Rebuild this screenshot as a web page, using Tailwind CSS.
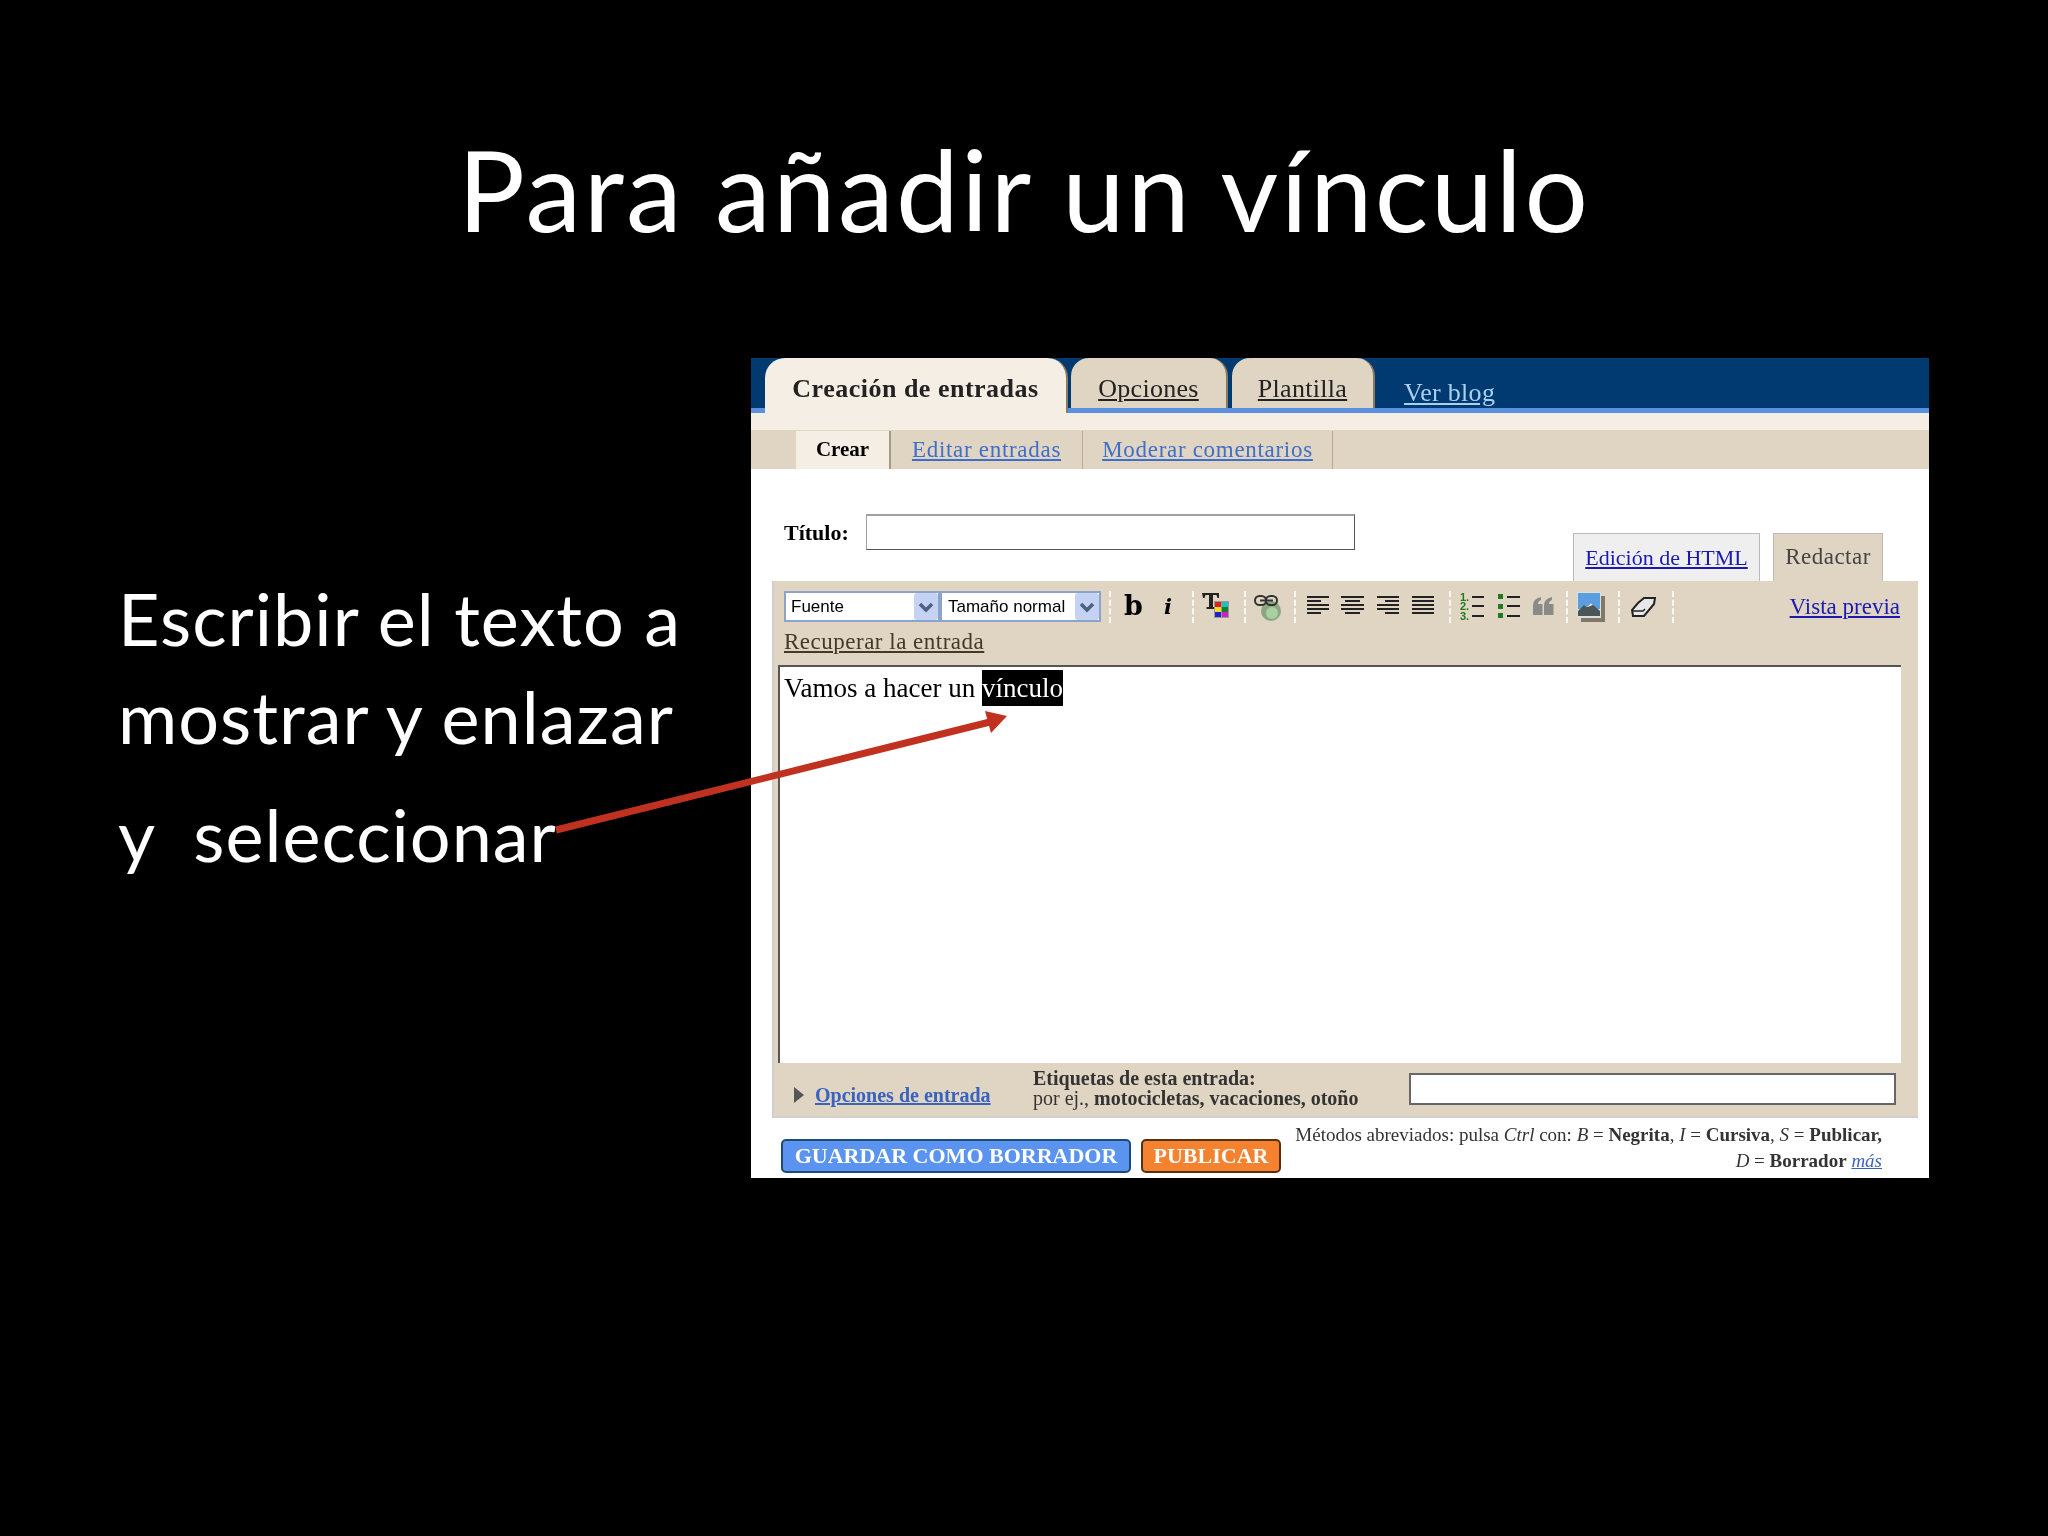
<!DOCTYPE html>
<html lang="es">
<head>
<meta charset="UTF-8">
<title>Para añadir un vínculo</title>
<script src="https://cdn.jsdelivr.net/npm/@tailwindcss/browser@4"></script>
</head>
<body class="bg-black">
<div class="relative w-[2048px] h-[1536px] overflow-hidden bg-black text-white font-['Lato',sans-serif]">

  <h1 class="h-[358px] pt-[119px] text-center text-[112px] leading-[140px] font-normal tracking-[2.4px]">Para añadir un vínculo</h1>

  <div class="flex">
    <!-- left text -->
    <div class="w-[751px] pl-[118px] pt-[211px] text-[72px] tracking-[1px]">
      <p class="leading-[98px]">Escribir el texto a</p>
      <p class="leading-[98px]">mostrar y enlazar</p>
      <p class="leading-[98px] mt-[20px] whitespace-pre">y  seleccionar</p>
    </div>

    <!-- blogger panel -->
    <div class="w-[1178px] h-[820px] bg-white text-black font-['Liberation_Serif',serif] flex flex-col blur-[0.4px]">
      <div class="h-[55px] bg-[#003a70] border-b-[5px] border-[#5b8fe0] flex items-start pl-[14px] text-[26px] tracking-[0.3px] shrink-0">
        <div class="w-[303px] h-[55px] pt-[6px] bg-[#f5eee4] rounded-t-[20px] border-r-2 border-[#8a7a60] flex items-center justify-center font-bold tracking-[0.5px] text-[#222]">Creación de entradas</div>
        <div class="ml-[3px] w-[157px] h-[50px] pt-[10px] bg-[#e0d5c3] rounded-t-[18px] border-r-2 border-[#8a7a60] flex items-center justify-center"><a class="underline text-[#222]">Opciones</a></div>
        <div class="ml-[4px] w-[143px] h-[50px] pt-[10px] bg-[#e0d5c3] rounded-t-[18px] border-r-2 border-[#8a7a60] flex items-center justify-center"><a class="underline text-[#222]">Plantilla</a></div>
        <a class="ml-[29px] h-[50px] pt-[10px] leading-[50px] underline text-[#a8d0f0]">Ver blog</a>
      </div>
      <div class="h-[17px] bg-[#f5eee4] shrink-0"></div>
      <div class="h-[39px] bg-[#e0d5c3] pl-[45px] pt-[1px] flex text-[23px] tracking-[0.7px] shrink-0">
        <div class="w-[95px] bg-[#f5eee4] border-r-2 border-[#a89a80] flex items-center justify-center font-bold text-[21px] tracking-normal">Crear</div>
        <div class="w-[192px] border-r border-[#b8aa90] flex items-center justify-center"><a class="underline text-[#3f6fc8]">Editar entradas</a></div>
        <div class="w-[250px] border-r border-[#b8aa90] flex items-center justify-center"><a class="underline text-[#3f6fc8]">Moderar comentarios</a></div>
      </div>

      <div class="flex-1 pl-[21px] pr-[11px] flex flex-col">
        <div class="h-[112px] flex shrink-0">
          <div class="pl-[12px] pt-[45px] flex items-start">
            <span class="w-[82px] mt-[4px] font-bold text-[22px] leading-[30px]">Título:</span>
            <div class="w-[489px] h-[36px] border border-t-2 border-[#555] border-t-[#a0a0a0] border-l-[#a0a0a0]"></div>
          </div>
          <div class="ml-auto mr-[35px] self-end flex items-end text-[22px]">
            <div class="w-[187px] h-[48px] bg-[#f0eff0] border border-[#bbb] border-b-0 flex items-center justify-center"><a class="underline text-[#1a1ab0]">Edición de HTML</a></div>
            <div class="ml-[13px] w-[110px] h-[48px] bg-[#e0d5c3] border border-[#bbb] border-b-0 flex items-center justify-center text-[#444] text-[23px] tracking-[0.5px]">Redactar</div>
          </div>
        </div>

        <!-- editor -->
        <div class="h-[537px] bg-[#e0d5c3] border-l-2 border-b-2 border-[#cfcfcf] shrink-0 flex flex-col">
          <div class="h-[84px] pl-[10px] pr-[18px] pt-[10px] shrink-0">
            <div class="flex items-start h-[31px]">
              <div class="w-[156px] h-[31px] bg-white border-2 border-[#8ca4cc] flex items-center justify-between pl-[5px] font-['Liberation_Sans',sans-serif] text-[17px]">Fuente
                <span class="w-[24px] h-[27px] bg-[#c4d3f3] rounded-[3px] flex items-center justify-center"><svg width="16" height="12" viewBox="0 0 16 12"><path d="M2 3l6 6 6-6" fill="none" stroke="#4d6185" stroke-width="3.500"/></svg></span></div>
              <div class="w-[161px] h-[31px] bg-white border-2 border-l-2 border-[#8ca4cc] flex items-center justify-between pl-[6px] font-['Liberation_Sans',sans-serif] text-[17px]">Tamaño normal
                <span class="w-[24px] h-[27px] bg-[#c4d3f3] rounded-[3px] flex items-center justify-center"><svg width="16" height="12" viewBox="0 0 16 12"><path d="M2 3l6 6 6-6" fill="none" stroke="#4d6185" stroke-width="3.500"/></svg></span></div>

              <div class="ml-[8px] w-0 h-[32px] border-l-2 border-dashed border-white/80"></div>
              <span class="ml-[13px] w-[26px] text-[27px] leading-[29px] font-bold font-['DejaVu_Serif',serif]">b</span>
              <span class="ml-[14px] w-[15px] text-[21px] leading-[31px] font-bold italic font-['DejaVu_Serif',serif]">i</span>
              <div class="ml-[13px] w-0 h-[32px] border-l-2 border-dashed border-white/80"></div>

              <!-- text colour -->
              <svg class="ml-[8px]" width="28" height="28" viewBox="0 0 28 28"><path d="M0 2h17v5h-1.500l-1-3h-3.500v12h2.500v2h-9v-2h2.500v-12h-3.500l-1 3h-1.500z" fill="#222"/><rect x="12" y="10" width="15" height="17" fill="#999"/><rect x="13" y="11" width="6" height="5" fill="#e02020"/><rect x="20" y="11" width="6" height="5" fill="#20c0c0"/><rect x="13" y="16" width="6" height="5" fill="#f0e020"/><rect x="20" y="16" width="6" height="5" fill="#108030"/><rect x="13" y="21" width="6" height="5" fill="#2020d0"/><rect x="20" y="21" width="6" height="5" fill="#d020c0"/></svg>
              <div class="ml-[14px] w-0 h-[32px] border-l-2 border-dashed border-white/80"></div>

              <!-- link -->
              <svg class="ml-[8px]" width="28" height="32" viewBox="0 0 28 32"><circle cx="17" cy="20" r="10" fill="#8aa880"/><circle cx="18" cy="22" r="6" fill="#a8d0a0"/><rect x="1" y="5" width="11" height="9" rx="4.500" fill="none" stroke="#333" stroke-width="2"/><rect x="12" y="5" width="11" height="9" rx="4.500" fill="none" stroke="#333" stroke-width="2"/><path d="M6 9.500h13" stroke="#333" stroke-width="2"/></svg>
              <div class="ml-[12px] w-0 h-[32px] border-l-2 border-dashed border-white/80"></div>

              <!-- alignment -->
              <svg class="ml-[11px] mt-[5px]" width="22" height="20" viewBox="0 0 22 20" stroke="#222" stroke-width="2"><path d="M0 1h22M0 5h14M0 9h22M0 13h22M0 17h14"/></svg>
              <svg class="ml-[12px] mt-[5px]" width="23" height="20" viewBox="0 0 23 20" stroke="#222" stroke-width="2"><path d="M0 1h23M4 5h15M0 9h23M0 13h23M4 17h15"/></svg>
              <svg class="ml-[13px] mt-[5px]" width="22" height="20" viewBox="0 0 22 20" stroke="#222" stroke-width="2"><path d="M0 1h22M8 5h14M0 9h22M0 13h22M8 17h14"/></svg>
              <svg class="ml-[13px] mt-[5px]" width="22" height="20" viewBox="0 0 22 20" stroke="#222" stroke-width="2"><path d="M0 1h22M0 5h22M0 9h22M0 13h22M0 17h22"/></svg>
              <div class="ml-[15px] w-0 h-[32px] border-l-2 border-dashed border-white/80"></div>

              <!-- lists -->
              <svg class="ml-[9px]" width="24" height="30" viewBox="0 0 24 30"><g fill="#1f7a1f" font-size="11" font-weight="bold" font-family="Liberation Sans"><text x="0" y="10">1.</text><text x="0" y="19">2.</text><text x="0" y="29">3.</text></g><path d="M12 6h12M12 15h12M12 25h12" stroke="#222" stroke-width="2"/></svg>
              <svg class="ml-[13px]" width="23" height="30" viewBox="0 0 23 30"><path d="M1 3h5v5h-5zM1 13h5v5h-5zM1 22h5v5h-5z" fill="#1f7a1f"/><path d="M10 6h13M10 15h13M10 25h13" stroke="#222" stroke-width="2"/></svg>
              <svg class="ml-[13px] mt-[6px]" width="21" height="18" viewBox="0 0 21 18" fill="#8a8a86"><path d="M0 8q0-6 8-8v3q-3 1-3 4h4.500v11h-9.500zM11 8q0-6 8-8v3q-3 1-3 4h4.500v11h-9.500z"/></svg>
              <div class="ml-[12px] w-0 h-[32px] border-l-2 border-dashed border-white/80"></div>

              <!-- picture -->
              <svg class="ml-[9px] mt-[1px]" width="28" height="30" viewBox="0 0 28 30"><rect x="4" y="4" width="24" height="26" fill="#5a5040" opacity=".7"/><rect x="0" y="0" width="24" height="26" fill="#d8dfe0"/><rect x="1" y="1" width="22" height="16" fill="#5a9ee0"/><path d="M1 19l6-6 3 2 4-4 9 8v5h-22z" fill="#4a5658"/><path d="M7 13l3 2 4-4 2 2-5 2z" fill="#dde"/></svg>
              <div class="ml-[13px] w-0 h-[32px] border-l-2 border-dashed border-white/80"></div>

              <!-- eraser -->
              <svg class="ml-[11px] mt-[6px]" width="25" height="21" viewBox="0 0 25 21"><path d="M7 6l6-5h11l-1 6-10 12h-11l-1-6z" fill="#e8e8e8" stroke="#222" stroke-width="2"/><path d="M1 14l11 0 2-2" fill="none" stroke="#222" stroke-width="1.500"/></svg>
              <div class="ml-[16px] w-0 h-[32px] border-l-2 border-dashed border-white/80"></div>
              <a class="ml-auto mt-[1px] text-[23px] leading-[30px] underline text-[#1a1ab0]">Vista previa</a>
            </div>
            <a class="block mt-[8px] text-[23px] tracking-[0.5px] leading-[24px] underline text-[#44382a]">Recuperar la entrada</a>
          </div>
          <div class="ml-[4px] mr-[17px] h-[398px] bg-white border-t-2 border-l-2 border-[#555] pl-[4px] pt-[3px] text-[27px] leading-[36px] shrink-0">Vamos a hacer un <span class="inline-block bg-black text-white">vínculo</span></div>
          <div class="flex-1 flex pl-[20px] pr-[22px] items-start text-[20px]">
            <div class="mt-[24px] w-0 h-0 border-y-[8px] border-y-transparent border-l-[10px] border-l-[#555]"></div>
            <a class="ml-[11px] mt-[20px] w-[218px] font-bold text-[#3a63c0] underline leading-[24px]">Opciones de entrada</a>
            <div class="text-[#333] leading-[20px] mt-[5px] w-[375px]">
              <p class="font-bold">Etiquetas de esta entrada:</p>
              <p>por ej., <b>motocicletas, vacaciones, otoño</b></p>
            </div>
            <div class="ml-auto mt-[10px] w-[487px] h-[32px] bg-white border-2 border-[#666]"></div>
          </div>
        </div>

        <!-- buttons + shortcuts -->
        <div class="flex-1 flex pl-[9px] pr-[36px]">
          <button class="mt-[21px] w-[350px] h-[34px] bg-[#5b94f0] border-2 border-[#1e4a78] rounded-[5px] text-white font-bold text-[22px] leading-none font-['Liberation_Serif',serif]">GUARDAR COMO BORRADOR</button>
          <button class="ml-[10px] mt-[21px] w-[140px] h-[34px] bg-[#f5822e] border-2 border-[#553015] rounded-[5px] text-white font-bold text-[22px] leading-none font-['Liberation_Serif',serif]">PUBLICAR</button>
          <div class="ml-auto mt-[4px] text-right text-[19px] leading-[26px] text-[#333]">
            <p>Métodos abreviados: pulsa <i>Ctrl</i> con: <i>B</i> = <b>Negrita</b>, <i>I</i> = <b>Cursiva</b>, <i>S</i> = <b>Publicar,</b></p>
            <p><i>D</i> = <b>Borrador</b> <a class="italic underline text-[#3a63c0]">más</a></p>
          </div>
        </div>
      </div>
    </div>
  </div>

  <!-- red arrow over the slide -->
  <svg class="absolute left-0 top-0 pointer-events-none" width="2048" height="1536" viewBox="0 0 2048 1536">
    <path d="M556 830L990 722" stroke="#c0311f" stroke-width="7" fill="none"/>
    <path d="M1007 716L985 711L991 733Z" fill="#c0311f"/>
  </svg>
</div>
</body>
</html>
